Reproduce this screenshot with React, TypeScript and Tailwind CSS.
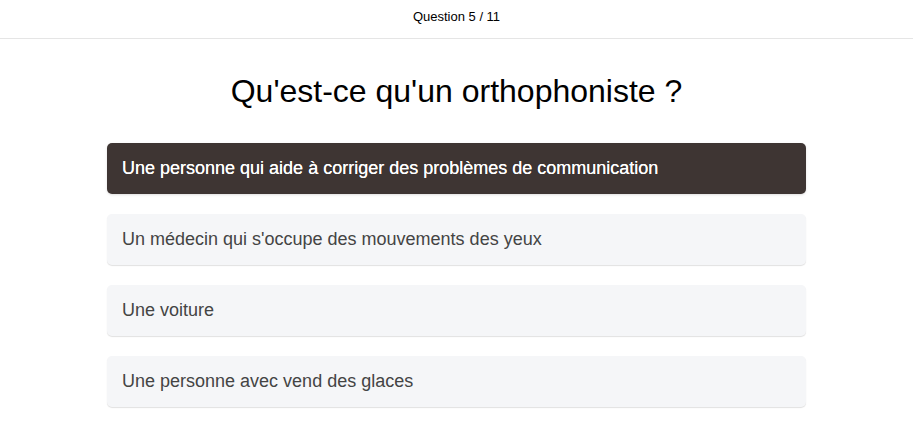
const options = [
  "Une personne qui aide à corriger des problèmes de communication",
  "Un médecin qui s'occupe des mouvements des yeux",
  "Une voiture",
  "Une personne avec vend des glaces",
];

export default function App() {
  const selected = 0;

  return (
    <div className="min-h-screen bg-white font-['Liberation_Sans',Arial,sans-serif] text-[#212529]">
      <header className="h-[39px] flex items-center justify-center border-b border-[#e5e5e5]">
        <span className="text-[13px] leading-[16px] -mt-[4px] text-black">Question 5 / 11</span>
      </header>
      <main className="w-[699px] mx-auto">
        <h1 className="text-center text-[32px] leading-[38px] text-black mt-[33px] mb-[33px]">
          Qu'est-ce qu'un orthophoniste ?
        </h1>
        <div className="flex flex-col gap-[20px]">
          {options.map((opt, i) => (
            <div
              key={i}
              className={
                i === selected
                  ? "h-[51px] flex items-center px-[15px] rounded-[5px] bg-[#3e3533] text-white text-[18px] font-medium [text-shadow:0_0_0.4px_#fff] shadow-sm"
                  : "h-[51px] flex items-center px-[15px] rounded-[5px] bg-[#f5f6f8] text-[#444] text-[18px] shadow-[0_1px_1px_rgba(0,0,0,0.12)]"
              }
            >
              {opt}
            </div>
          ))}
        </div>
      </main>
    </div>
  );
}
